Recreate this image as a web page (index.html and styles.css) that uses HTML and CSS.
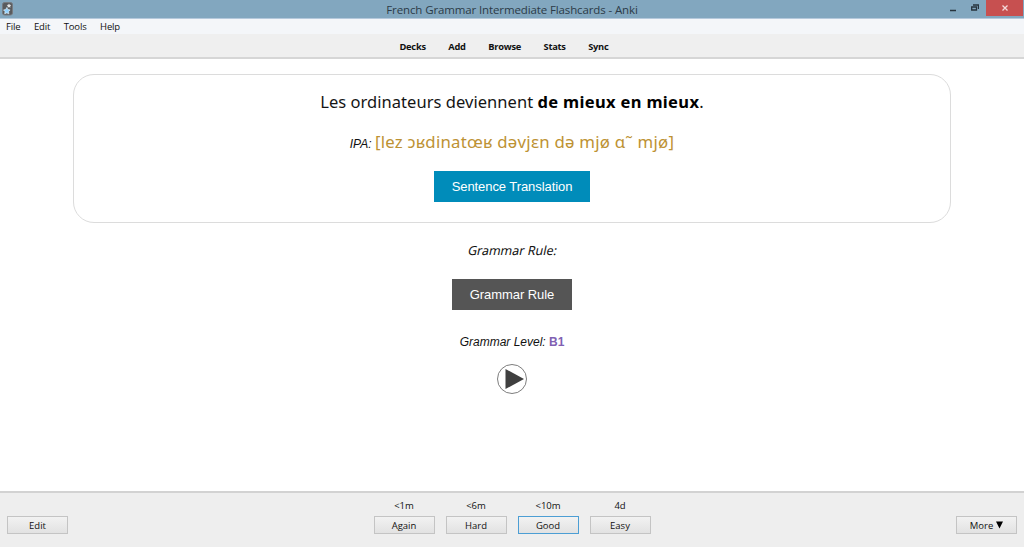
FILE: index.html
```html
<!DOCTYPE html>
<html lang="en">
<head>
<meta charset="utf-8">
<title>French Grammar Intermediate Flashcards - Anki</title>
<link rel="stylesheet" href="styles.css">
</head>
<body>
<div class="window">
  <header class="titlebar">
    <svg class="app-icon" viewBox="0 0 11 14" width="11" height="14"><rect x=".5" y=".5" width="10" height="12.5" rx="2" fill="#595b5e" stroke="#777b80"/><path d="M7 1.5l.7 1.3 1.5.3-1 1.1.2 1.5-1.4-.6-1.4.6.2-1.5-1-1.1 1.5-.3z" fill="#e0e2e4"/><path d="M4.800 5.500l1.100 2 2.200.4-1.500 1.700.3 2.200-2.100-.9-2.100.9.300-2.200-1.500-1.700 2.200-.4z" fill="#8fd0ff" stroke="#edf6fc" stroke-width=".6"/></svg>
    <h1 class="window-title">French Grammar Intermediate Flashcards - Anki</h1>
    <div class="controls">
      <span class="control"><svg width="8" height="10" viewBox="0 0 8 10"><path d="M1 7.500h6" stroke="#27343e" stroke-width="1.500"/></svg></span>
      <span class="control"><svg width="8" height="10" viewBox="0 0 8 10"><path d="M2 2h5.500v4" fill="none" stroke="#27343e" stroke-width="1.300"/><path d="M.7 4h4.800v3H.7z" fill="none" stroke="#27343e" stroke-width="1.300"/></svg></span>
      <span class="control close"><svg width="8" height="10" viewBox="0 0 8 10"><path d="M1.500 2.500l5 5m0-5l-5 5" stroke="#f4dada" stroke-width="1.300"/></svg></span>
    </div>
  </header>
  <nav class="menubar"><span>File</span><span>Edit</span><span>Tools</span><span>Help</span></nav>
  <nav class="toolbar"><span>Decks</span><span>Add</span><span>Browse</span><span>Stats</span><span>Sync</span></nav>
  <main class="review">
    <section class="card">
      <p class="sentence">Les ordinateurs deviennent <b>de mieux en mieux</b>.</p>
      <p class="ipa"><i>IPA:</i> <span class="phonetic">[lez ɔʁdinatœʁ dəvjɛn də mjø ɑ˜ mjø]</span></p>
      <button class="reveal translation">Sentence Translation</button>
    </section>
    <p class="rule-label">Grammar Rule:</p>
    <button class="reveal rule">Grammar Rule</button>
    <p class="level"><i>Grammar Level:</i> <b>B1</b></p>
    <svg class="play" width="32" height="32" viewBox="0 0 32 32"><circle cx="16" cy="16" r="14.500" fill="#fff" stroke="#5c5c5c" stroke-width=".8"/><path d="M9.500 6v20L28 16z" fill="#3f3f3f"/></svg>
  </main>
  <footer class="answers">
    <button class="btn">Edit</button>
    <div class="choices">
      <div class="choice"><span>&lt;1m</span><button class="btn">Again</button></div>
      <div class="choice"><span>&lt;6m</span><button class="btn">Hard</button></div>
      <div class="choice"><span>&lt;10m</span><button class="btn focused">Good</button></div>
      <div class="choice"><span>4d</span><button class="btn">Easy</button></div>
    </div>
    <button class="btn">More <svg width="7" height="8" viewBox="0 0 7 8"><path d="M0 .5h7L3.500 7.500z" fill="#000"/></svg></button>
  </footer>
</div>
</body>
</html>
```

FILE: styles.css
```css
* { box-sizing: border-box; }
body { margin: 0; background: #fff; font: 9px "Open Sans", sans-serif; color: #111; }
p, h1 { margin: 0; }
button { margin: 0; font: inherit; }
.window { display: flex; flex-direction: column; height: 547px; overflow: hidden; }

.titlebar { display: grid; grid-template-columns: 1fr auto 1fr; height: 19px; background: #82a7bf; border-bottom: 1px solid #b5c9dc; }
.app-icon { margin: 2px 0 0 2px; }
.window-title { font: 11.500px/20px "Open Sans", sans-serif; color: #2c3b47; letter-spacing: -.12px; }
.controls { display: flex; justify-content: flex-end; height: 16px; }
.control { display: flex; width: 22px; justify-content: center; align-items: center; }
.close { width: 37px; margin-right: 1px; background: #c75050; }

.menubar { display: flex; gap: 13.500px; height: 15px; padding-left: 6px; background: #f4f6f9; line-height: 16px; font-size: 9.500px; letter-spacing: -.15px; }
.toolbar { display: flex; justify-content: center; gap: 22.500px; height: 25px; padding-right: 16px; background: #efefef; border-bottom: 2px solid #d6d6d6; font-weight: 700; font-size: 9.300px; line-height: 26px; letter-spacing: -.25px; }

.review { display: flex; flex-direction: column; align-items: center; flex: 1; padding-top: 15px; }
.card { display: flex; flex-direction: column; align-items: center; width: 878px; height: 149px; padding-top: 13px; border: 1px solid #dcdcdc; border-radius: 21px; }
.sentence { font: 16.500px/28px "Noto Sans", sans-serif; letter-spacing: .04px; white-space: nowrap; color: #151515; }
.sentence b { color: #000; letter-spacing: .34px; }
.ipa { margin-top: 12px; font: 12px/28px "Liberation Sans", sans-serif; white-space: nowrap; }
.phonetic { font: 16.800px/28px "Noto Sans", sans-serif; letter-spacing: .23px; color: #bd9233; }
.reveal { border: 0; padding: 0; height: 31px; color: #fff; font: 13px/31px "Liberation Sans", sans-serif; letter-spacing: -.07px; white-space: nowrap; }
.translation { width: 156px; margin-top: 13px; background: #008cba; }
.rule-label { margin-top: 18px; font: 12.500px/20px "Noto Sans", sans-serif; letter-spacing: 0; transform: skewX(-12deg); }
.rule { width: 120px; margin-top: 18px; background: #555; }
.level { margin-top: 22px; font: 12px/20px "Liberation Sans", sans-serif; }
.level b { color: #8060b2; }
.play { margin-top: 11px; }

.answers { display: flex; justify-content: space-between; align-items: flex-start; height: 56px; padding: 7px 7px 0; background: #eee; border-top: 2px solid #d2d2d2; }
.btn { display: flex; align-items: center; justify-content: center; gap: 3px; width: 61px; height: 18px; padding: 0; border: 1px solid #c4c4c4; background: linear-gradient(#f2f2f2, #e2e2e2); color: #111; font-size: 9.500px; }
.answers > .btn { margin-top: 16px; }
.focused { border-color: #4c9ed4; }
.choices { display: flex; gap: 11px; }
.choice { display: flex; flex-direction: column; align-items: center; font-size: 9.500px; }
.choice span { height: 16px; line-height: 12px; }
```
